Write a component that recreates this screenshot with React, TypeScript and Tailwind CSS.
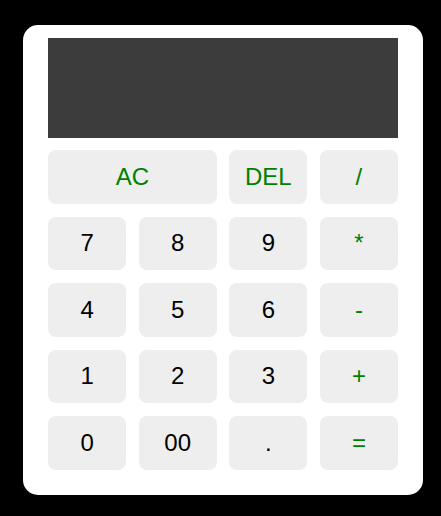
export default function App() {
  const keys: { label: string; op?: boolean; wide?: boolean }[] = [
    { label: "AC", op: true, wide: true },
    { label: "DEL", op: true },
    { label: "/", op: true },
    { label: "7" },
    { label: "8" },
    { label: "9" },
    { label: "*", op: true },
    { label: "4" },
    { label: "5" },
    { label: "6" },
    { label: "-", op: true },
    { label: "1" },
    { label: "2" },
    { label: "3" },
    { label: "+", op: true },
    { label: "0" },
    { label: "00" },
    { label: "." },
    { label: "=", op: true },
  ];

  return (
    <div className="min-h-[516px] w-full bg-black pt-[25px] pl-[23px] font-['Liberation_Sans',Arial,sans-serif]">
      <div className="w-[400px] rounded-[15px] bg-white px-[25px] pt-[13px] pb-[25px]">
        {/* display */}
        <div className="h-[100px] w-[350px] bg-[#3c3c3c]"></div>

        {/* keys */}
        <div className="mt-[12px] grid grid-cols-4 gap-x-[12.5px] gap-y-[13px]">
          {keys.map((k) => (
            <button
              key={k.label}
              className={`flex h-[53.5px] items-center justify-center rounded-[8px] bg-[#eeeeee] text-[24px] ${
                k.wide ? "col-span-2" : ""
              } ${k.op ? "text-[#008000]" : "text-black"}`}
            >
              {k.label}
            </button>
          ))}
        </div>
      </div>
    </div>
  );
}
